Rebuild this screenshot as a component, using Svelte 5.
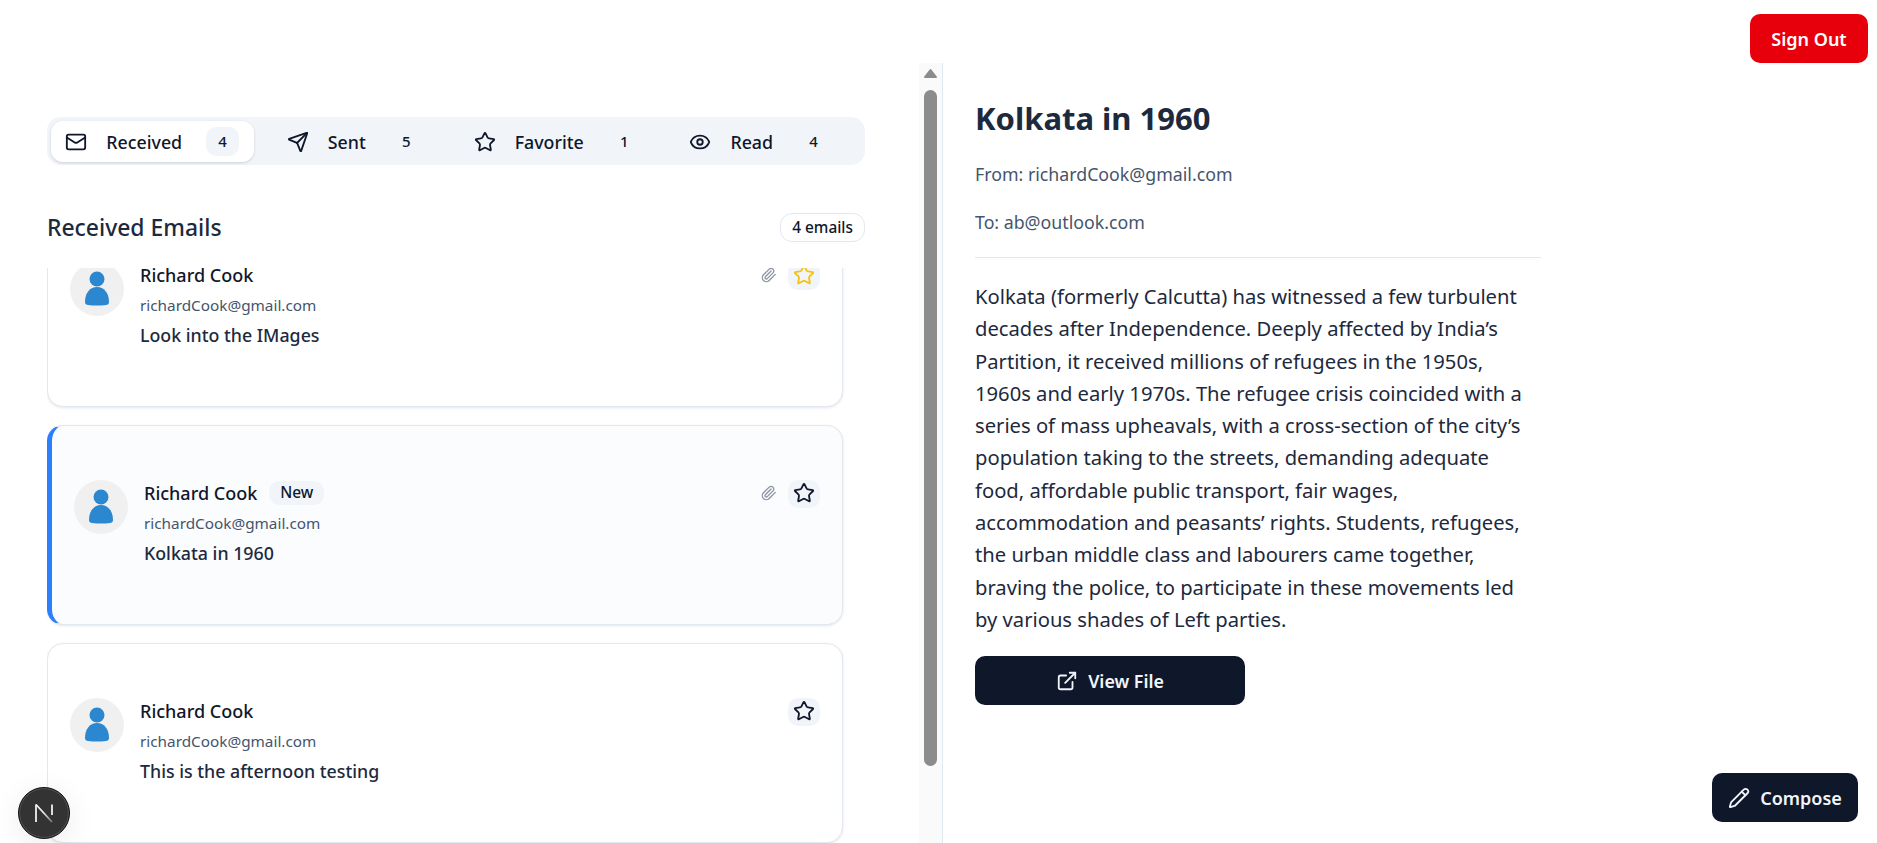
<script>
	const tabs = [
		{ id: 'received', label: 'Received', count: 4 },
		{ id: 'sent', label: 'Sent', count: 5 },
		{ id: 'favorite', label: 'Favorite', count: 1 },
		{ id: 'read', label: 'Read', count: 4 }
	];

	const emails = [
		{ name: 'Richard Cook', address: 'richardCook@gmail.com', subject: 'Look into the IMages', attachment: true, favorite: true },
		{ name: 'Richard Cook', address: 'richardCook@gmail.com', subject: 'Kolkata in 1960', attachment: true, isNew: true, active: true },
		{ name: 'Richard Cook', address: 'richardCook@gmail.com', subject: 'This is the afternoon testing' }
	];

	const starPath = 'M11.525 2.295a.53.53 0 0 1 .95 0l2.31 4.679a2.123 2.123 0 0 0 1.595 1.16l5.166.756a.53.53 0 0 1 .294.904l-3.736 3.638a2.123 2.123 0 0 0-.611 1.878l.882 5.14a.53.53 0 0 1-.771.56l-4.618-2.428a2.122 2.122 0 0 0-1.973 0L6.396 21.01a.53.53 0 0 1-.77-.56l.881-5.139a2.122 2.122 0 0 0-.611-1.879L2.16 9.795a.53.53 0 0 1 .294-.906l5.165-.755a2.122 2.122 0 0 0 1.597-1.16z';
</script>

<div class="page">
	<header class="topbar">
		<button class="sign-out">Sign Out</button>
	</header>

	<main class="main">
		<section class="left">
			<nav class="tabs">
				{#each tabs as tab, i}
					<button class="tab" class:selected={i === 0}>
						<svg class="icon" viewBox="0 0 24 24">
							{#if tab.id === 'received'}
								<path d="m22 7-8.991 5.727a2 2 0 0 1-2.009 0L2 7" />
								<rect x="2" y="4" width="20" height="16" rx="2" />
							{:else if tab.id === 'sent'}
								<path d="M14.536 21.686a.5.5 0 0 0 .937-.024l6.5-19a.496.496 0 0 0-.635-.635l-19 6.5a.5.5 0 0 0-.024.937l7.93 3.18a2 2 0 0 1 1.112 1.11z" />
								<path d="m21.854 2.147-10.94 10.939" />
							{:else if tab.id === 'favorite'}
								<path d={starPath} />
							{:else}
								<path d="M2.062 12.348a1 1 0 0 1 0-.696 10.75 10.75 0 0 1 19.876 0 1 1 0 0 1 0 .696 10.75 10.75 0 0 1-19.876 0" />
								<circle cx="12" cy="12" r="3" />
							{/if}
						</svg>
						<span class="tab-label">{tab.label}</span>
						<span class="tab-count">{tab.count}</span>
					</button>
				{/each}
			</nav>

			<div class="list-head">
				<h2>Received Emails</h2>
				<span class="total">4 emails</span>
			</div>

			<div class="list">
				{#each emails as email}
					<article class="card" class:active={email.active}>
						<svg class="avatar" viewBox="0 0 54 54">
							<circle cx="27" cy="27" r="27" fill="#f0f0f0" />
							<circle cx="27" cy="17" r="7.5" fill="#2b88d0" />
							<path d="M15 40C15 31 20 25 27 25C34 25 39 31 39 40C39 42 38 42.6 36 43Q27 44 18 43C16 42.6 15 42 15 40Z" fill="#2b88d0" />
						</svg>
						<div class="card-body">
							<div class="sender">
								<span class="name">{email.name}</span>
								{#if email.isNew}<span class="new">New</span>{/if}
							</div>
							<div class="address">{email.address}</div>
							<div class="subject">{email.subject}</div>
						</div>
						<div class="actions">
							{#if email.attachment}
								<svg class="clip" viewBox="0 0 24 24">
									<path d="m21.44 11.05-9.19 9.19a6 6 0 0 1-8.49-8.49l8.57-8.57A4 4 0 1 1 18 8.84l-8.59 8.57a2 2 0 0 1-2.83-2.83l8.49-8.48" />
								</svg>
							{/if}
							<button class="star" class:on={email.favorite} aria-label="Favorite">
								<svg class="icon" viewBox="0 0 24 24"><path d={starPath} /></svg>
							</button>
						</div>
					</article>
				{/each}
			</div>
		</section>

		<div class="scrollbar">
			<svg class="arrow" viewBox="0 0 15 11"><path d="M7.5 2 L13 9 H2 Z" /></svg>
			<span class="thumb"></span>
		</div>

		<section class="detail">
			<h1>Kolkata in 1960</h1>
			<p class="meta">From: richardCook@gmail.com</p>
			<p class="meta">To: ab@outlook.com</p>
			<hr />
			<p class="text">
				Kolkata (formerly Calcutta) has witnessed a few turbulent decades after Independence. Deeply affected by India’s Partition, it received millions of refugees in the 1950s, 1960s and early 1970s. The refugee crisis coincided with a series of mass upheavals, with a cross-section of the city’s population taking to the streets, demanding adequate food, affordable public transport, fair wages, accommodation and peasants’ rights. Students, refugees, the urban middle class and labourers came together, braving the police, to participate in these movements led by various shades of Left parties.
			</p>
			<button class="view-file">
				<svg class="icon" viewBox="0 0 24 24">
					<path d="M15 3h6v6" />
					<path d="M10 14 21 3" />
					<path d="M18 13v6a2 2 0 0 1-2 2H5a2 2 0 0 1-2-2V8a2 2 0 0 1 2-2h6" />
				</svg>
				View File
			</button>
		</section>
	</main>

	<button class="compose">
		<svg class="icon" viewBox="0 0 24 24">
			<path d="M21.174 6.812a1 1 0 0 0-3.986-3.987L3.842 16.174a2 2 0 0 0-.5.83l-1.321 4.352a.5.5 0 0 0 .623.622l4.353-1.32a2 2 0 0 0 .83-.497z" />
			<path d="m15 5 4 4" />
		</svg>
		Compose
	</button>

	<div class="dev-badge">
		<svg viewBox="0 0 20 20" width="20" height="20">
			<defs>
				<linearGradient id="fade" x1="0" y1="0" x2="1" y2="1">
					<stop offset="0.45" stop-color="#f0f0f0" />
					<stop offset="1" stop-color="#777" />
				</linearGradient>
			</defs>
			<path class="stem" d="M2 19V1.5" />
			<path class="stem" d="M18 1.5V12" />
			<path class="diag" d="M2 1.5 18 19" stroke="url(#fade)" />
		</svg>
	</div>
</div>

<style>
	:global(body) {
		background: #fff;
		font-family: 'Noto Sans', 'Open Sans', sans-serif;
		color: #0f172b;
	}

	button {
		font-family: inherit;
		border: none;
		background: none;
		padding: 0;
		color: inherit;
	}

	.icon {
		width: 22px;
		height: 22px;
		flex: none;
		fill: none;
		stroke: currentColor;
		stroke-width: 2;
		stroke-linecap: round;
		stroke-linejoin: round;
	}

	.page {
		position: relative;
		height: 843px;
		overflow: hidden;
	}

	.topbar {
		display: flex;
		justify-content: flex-end;
		height: 63px;
		padding: 14px 9px 0 0;
		box-sizing: border-box;
	}

	.sign-out {
		width: 118px;
		height: 49px;
		border-radius: 10px;
		background: #e7000b;
		color: #fff;
		font-size: 18px;
		font-weight: 600;
	}

	.main {
		display: flex;
		height: 780px;
	}

	.left {
		width: 919px;
		flex: none;
		box-sizing: border-box;
		padding: 54px 54px 0 47px;
	}

	.tabs {
		display: grid;
		grid-template-columns: repeat(4, 1fr);
		height: 48px;
		padding: 4px;
		box-sizing: border-box;
		background: #f1f5f9;
		border-radius: 14px;
	}

	.tab {
		display: flex;
		align-items: center;
		justify-content: center;
		height: 41px;
		border-radius: 12px;
		font-size: 17.8px;
		font-weight: 500;
	}

	.tab.selected {
		background: #fff;
		box-shadow: 0 1px 3px rgba(0, 0, 0, 0.15);
	}

	.tab-label {
		margin-left: 19px;
		margin-right: 24px;
	}

	.tab-count {
		width: 33px;
		height: 29px;
		line-height: 29px;
		border-radius: 10px;
		font-size: 15px;
		text-align: center;
	}

	.selected .tab-count {
		background: #f1f5f9;
	}

	.list-head {
		display: flex;
		justify-content: space-between;
		align-items: center;
		margin-top: 47px;
		height: 31px;
	}

	h2 {
		margin: 0;
		line-height: 31px;
		font-size: 22.9px;
		font-weight: 500;
		color: #1d293d;
	}

	.total {
		height: 29px;
		line-height: 27px;
		box-sizing: border-box;
		padding: 0 11px;
		border: 1px solid #e2e8f0;
		border-radius: 12px;
		font-size: 15.4px;
		font-weight: 500;
	}

	.list {
		display: flex;
		flex-direction: column;
		gap: 18px;
		height: 575px;
		margin-top: 25px;
		padding: 0 22px 4px 0;
		overflow: hidden;
	}

	.card {
		display: flex;
		flex: none;
		align-items: flex-start;
		height: 200px;
		box-sizing: border-box;
		padding: 54px 22px 0;
		background: #fff;
		border: 1px solid #e2e8f0;
		border-radius: 16px;
		box-shadow: 0 1px 3px rgba(0, 0, 0, 0.1);
	}

	.card:first-child {
		margin-top: -61px;
	}

	.card.active {
		background: #fbfcfe;
		border-left: 5px solid #2b7fff;
	}

	.avatar {
		width: 54px;
		height: 54px;
		flex: none;
	}

	.card-body {
		flex: 1;
		margin-left: 16px;
		margin-top: -1px;
	}

	.sender {
		display: flex;
		align-items: center;
		gap: 12px;
		height: 28px;
	}

	.name {
		font-size: 18px;
		font-weight: 500;
		color: #0f172b;
	}

	.new {
		height: 24px;
		line-height: 23px;
		padding: 0 11px;
		border-radius: 10px;
		background: #f1f5f9;
		font-size: 15.5px;
		font-weight: 500;
	}

	.address {
		margin-top: 3px;
		height: 26px;
		line-height: 26px;
		font-size: 15.3px;
		color: #45556c;
	}

	.subject {
		margin-top: 3px;
		height: 28px;
		line-height: 28px;
		font-size: 17.8px;
		font-weight: 500;
		color: #1d293d;
	}

	.actions {
		display: flex;
		align-items: flex-start;
		gap: 11px;
	}

	.clip {
		width: 16px;
		height: 16px;
		margin-top: 5px;
		fill: none;
		stroke: #8b93a3;
		stroke-width: 2;
		stroke-linecap: round;
		stroke-linejoin: round;
	}

	.star {
		display: flex;
		align-items: center;
		justify-content: center;
		width: 32px;
		height: 28px;
		padding-bottom: 3px;
		border-radius: 10px;
		background: #f1f5f9;
	}

	.star.on {
		color: #f5c211;
	}

	.scrollbar {
		display: flex;
		flex-direction: column;
		align-items: center;
		width: 23px;
		flex: none;
		box-sizing: border-box;
		background: #fafafa;
		padding: 5px 5px 0 5px;
	}

	.arrow {
		width: 15px;
		height: 11px;
		fill: #8c8c8c;
		stroke: #8c8c8c;
		stroke-width: 2;
		stroke-linejoin: round;
	}

	.thumb {
		width: 13px;
		height: 676px;
		margin-top: 11px;
		border-radius: 7px;
		background: #8c8c8c;
	}

	.detail {
		flex: 1;
		border-left: 1px solid #e2e8f0;
		padding-left: 32px;
		min-width: 0;
	}

	h1 {
		margin: 33px 0 0;
		height: 45px;
		line-height: 45px;
		font-size: 31px;
		font-weight: 700;
		color: #1d293d;
	}

	.meta {
		margin: 0;
		height: 24px;
		line-height: 24px;
		font-size: 17.75px;
		color: #45556c;
	}

	h1 + .meta {
		margin-top: 21px;
	}

	.meta + .meta {
		margin-top: 24px;
	}

	hr {
		width: 566px;
		margin: 23px 0 0;
		border: none;
		border-top: 1px solid #e2e8f0;
	}

	.text {
		width: 566px;
		margin: 22px 0 0;
		font-size: 20.2px;
		line-height: 32.3px;
		color: #1d293d;
	}

	.view-file {
		display: flex;
		align-items: center;
		justify-content: center;
		gap: 10px;
		width: 270px;
		height: 49px;
		margin-top: 21px;
		border-radius: 10px;
		background: #0f172b;
		color: #f1f5f9;
		font-size: 17.8px;
		font-weight: 600;
	}

	.compose {
		position: absolute;
		right: 19px;
		bottom: 21px;
		display: flex;
		align-items: center;
		justify-content: center;
		gap: 10px;
		width: 146px;
		height: 49px;
		border-radius: 10px;
		background: #0f172b;
		color: #f1f5f9;
		font-size: 18px;
		font-weight: 600;
	}

	.dev-badge {
		position: absolute;
		left: 18px;
		top: 787px;
		width: 52px;
		height: 52px;
		box-sizing: border-box;
		display: flex;
		align-items: center;
		justify-content: center;
		border-radius: 50%;
		background: #333;
		border: 1px solid #111;
		box-shadow: 0 0 0 1px #555 inset, 0 6px 30px rgba(0, 0, 0, 0.08);
	}

	.dev-badge path {
		fill: none;
		stroke-width: 1.8;
	}

	.dev-badge .stem {
		stroke: #f0f0f0;
	}
</style>
